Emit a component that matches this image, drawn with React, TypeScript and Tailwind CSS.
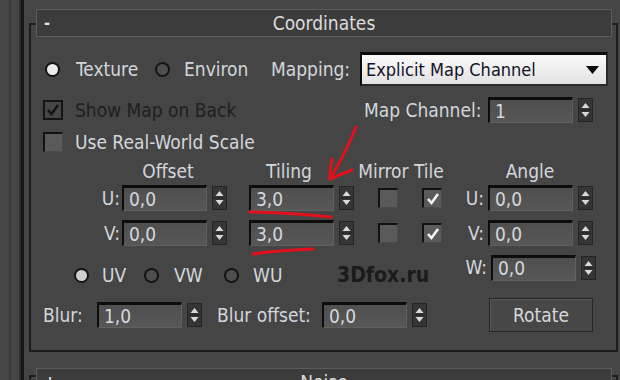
import React from "react";

const FONT = "font-['DejaVu_Sans_Condensed','DejaVu_Sans',sans-serif]";

function Arrows() {
  return (
    <svg width="15" height="24" viewBox="0 0 15 24" className="shrink-0">
      <rect x="0" y="0" width="15" height="24" fill="#353535" />
      <rect x="0.5" y="0.5" width="14" height="23" fill="none" stroke="#242424" />
      <path d="M3.5 10 L7.5 5 L11.5 10 Z" fill="#d9d9d9" />
      <line x1="2" y1="12" x2="13" y2="12" stroke="#222" strokeWidth="1" />
      <path d="M3.5 14 L11.5 14 L7.5 19 Z" fill="#d9d9d9" />
    </svg>
  );
}

function Spinner({ value }: { value: string }) {
  return (
    <div className="flex items-center gap-[5px] shrink-0">
      <div className="w-[85px] h-[26px] bg-[linear-gradient(#4f4f4f,#575757)] border-t-[3px] border-l-[2px] border-t-[#0d0d0d] border-l-[#0d0d0d] border-r border-b border-r-[#606060] border-b-[#606060] flex items-center pl-[5px] text-[#d4d7dd] text-[19px] leading-none">
        {value}
      </div>
      <Arrows />
    </div>
  );
}

function Check({ checked, dark }: { checked?: boolean; dark?: boolean }) {
  if (dark) {
    return (
      <div className="w-[20px] h-[20px] shrink-0 bg-[#464646] border-2 border-[#141414] flex items-center justify-center">
        <svg width="14" height="14" viewBox="0 0 14 14">
          <path d="M2 7 L5.5 11 L12 2" fill="none" stroke="#141414" strokeWidth="2.4" />
        </svg>
      </div>
    );
  }
  return (
    <div className="w-[20px] h-[20px] shrink-0 bg-[#5a5a5a] border-t-2 border-l-2 border-t-[#121212] border-l-[#121212] border-r border-b border-r-[#4a4a4a] border-b-[#4a4a4a] flex items-center justify-center">
      {checked && (
        <svg width="14" height="14" viewBox="0 0 14 14">
          <path d="M2 7 L5.5 11 L12 2" fill="none" stroke="#f2f2f2" strokeWidth="2.6" />
        </svg>
      )}
    </div>
  );
}

function Radio({ on, light }: { on?: boolean; light?: string }) {
  return (
    <div className="w-[15px] h-[15px] shrink-0 rounded-full bg-[#141414] p-[2px] flex">
      <div
        className={
          on
            ? light === "soft"
              ? "flex-1 rounded-full bg-[#cfcfcf]"
              : "flex-1 rounded-full bg-[#ececec]"
            : "flex-1 rounded-full bg-[#4e4e4e]"
        }
      />
    </div>
  );
}

export default function App() {
  return (
    <div className={`w-[620px] h-[380px] bg-[#454545] flex overflow-hidden relative ${FONT} text-[#d3d6dc] text-[19px] leading-none`}>
      {/* left frame lines */}
      <div className="flex h-full shrink-0">
        <div className="w-[9px]" />
        <div className="w-[2px] bg-[#393939]" />
        <div className="w-[8px]" />
        <div className="w-[2px] bg-[#2e2e2e]" />
        <div className="w-[3px] bg-[#171717]" />
        <div className="w-[5px]" />
      </div>

      <div className="flex flex-col w-[589px] shrink-0">
        {/* Coordinates rollout */}
        <div className="mt-[23px] h-[329px] shrink-0 border-2 border-[#1c1c1c] flex flex-col">
          <div className="-mt-[16px] ml-[5px] w-[576px] h-[28px] shrink-0 bg-[#3c3c3c] border border-[#5c5c5c] grid grid-cols-[1fr_auto_1fr] items-center">
            <span className="pl-[7px] text-[#e6e6e6] text-[16px] font-bold">-</span>
            <span className="text-[#dcdcdc]">Coordinates</span>
            <span />
          </div>

          {/* row 1 */}
          <div className="mt-[15px] h-[34px] flex items-center">
            <div className="ml-[14px]"><Radio on /></div>
            <span className="w-[95px] pl-[16px]">Texture</span>
            <Radio />
            <span className="w-[101px] pl-[14px]">Environ</span>
            <span className="w-[89px]">Mapping:</span>
            <div className="w-[248px] h-[34px] bg-[linear-gradient(#fafafa,#e2e2e2)] border-t-[3px] border-l-[2px] border-t-[#0b0b0b] border-l-[#0b0b0b] border-r-2 border-b-2 border-r-[#2a2a2a] border-b-[#2a2a2a] flex items-center justify-between pl-[4px] pr-[7px] text-[#12122a] text-[18px]">
              <span>Explicit Map Channel</span>
              <svg width="13" height="8" viewBox="0 0 13 8">
                <path d="M0 0 L13 0 L6.5 8 Z" fill="#0a0a0a" />
              </svg>
            </div>
          </div>

          {/* row 2 */}
          <div className="mt-[11px] h-[26px] flex items-center">
            <div className="ml-[12px]"><Check dark /></div>
            <span className="w-[301px] pl-[12px] text-[#202020]">Show Map on Back</span>
            <span className="w-[124px]">Map Channel:</span>
            <Spinner value="1" />
          </div>

          {/* row 3 */}
          <div className="mt-[9px] h-[20px] flex items-center">
            <div className="ml-[12px]"><Check /></div>
            <span className="pl-[12px]">Use Real-World Scale</span>
          </div>

          {/* headers */}
          <div className="mt-[9px] h-[20px] flex items-center">
            <span className="ml-[91px] w-[92px] text-center">Offset</span>
            <span className="ml-[35px] w-[80px] text-center">Tiling</span>
            <span className="ml-[22px] w-[100px] text-center">Mirror Tile</span>
            <span className="ml-[39px] w-[80px] text-center">Angle</span>
          </div>

          {/* U row */}
          <div className="mt-[4px] h-[26px] flex items-center">
            <span className="ml-[60px] w-[31px] text-right pr-[2px]">U:</span>
            <Spinner value="0,0" />
            <div className="ml-[22px]"><Spinner value="3,0" /></div>
            <div className="ml-[24px]"><Check /></div>
            <div className="ml-[24px]"><Check checked /></div>
            <span className="w-[46px] text-right pr-[4px]">U:</span>
            <Spinner value="0,0" />
          </div>

          {/* V row */}
          <div className="mt-[9px] h-[26px] flex items-center">
            <span className="ml-[60px] w-[31px] text-right pr-[2px]">V:</span>
            <Spinner value="0,0" />
            <div className="ml-[22px]"><Spinner value="3,0" /></div>
            <div className="ml-[24px]"><Check /></div>
            <div className="ml-[24px]"><Check checked /></div>
            <span className="w-[46px] text-right pr-[4px]">V:</span>
            <Spinner value="0,0" />
          </div>

          {/* W row */}
          <div className="mt-[8px] h-[27px] flex items-start">
            <div className="mt-[13px] h-[16px] flex items-center">
              <div className="ml-[43px]"><Radio on light="soft" /></div>
              <span className="w-[55px] pl-[13px]">UV</span>
              <Radio />
              <span className="w-[65px] pl-[15px]">VW</span>
              <Radio />
              <span className="w-[98px] pl-[14px]">WU</span>
              <span className="w-[108px] font-bold text-[21px] text-[#1b1b1b]">3Dfox.ru</span>
            </div>
            <div className="h-[27px] flex items-center">
              <span className="w-[46px] text-right pr-[4px]">W:</span>
              <Spinner value="0,0" />
            </div>
          </div>

          {/* Blur row */}
          <div className="mt-[17px] h-[34px] flex items-center">
            <span className="ml-[12px] w-[54px]">Blur:</span>
            <Spinner value="1,0" />
            <span className="ml-[15px] w-[105px]">Blur offset:</span>
            <Spinner value="0,0" />
            <button className="ml-[62px] w-[104px] h-[34px] bg-[#474747] border border-[#262626] shadow-[inset_1px_1px_0_#585858] text-[#d6d8dc] text-[19px] leading-none">
              Rotate
            </button>
          </div>
        </div>

        {/* Noise rollout */}
        <div className="mt-[23px] h-[60px] shrink-0 border-2 border-[#1c1c1c] flex flex-col">
          <div className="-mt-[9px] ml-[5px] w-[576px] h-[28px] shrink-0 bg-[#3c3c3c] border border-[#5c5c5c] grid grid-cols-[1fr_auto_1fr] items-center">
            <span className="pl-[7px] text-[#e6e6e6] text-[16px] font-bold">+</span>
            <span className="text-[#dcdcdc]">Noise</span>
            <span />
          </div>
        </div>
      </div>

      {/* red annotations */}
      <svg className="absolute inset-0 pointer-events-none" width="620" height="380" viewBox="0 0 620 380">
        <g fill="none" stroke="#e3101c" strokeWidth="3" strokeLinecap="round" strokeLinejoin="round">
          <path d="M356 127 Q 346 152 330 179" />
          <path d="M330 179 Q 330 168 332 159" />
          <path d="M330 179 Q 341 174 352 170" />
          <path d="M250 212 Q 292 213 331 217" />
          <path d="M253 254 Q 282 250 313 249" />
        </g>
      </svg>
    </div>
  );
}
